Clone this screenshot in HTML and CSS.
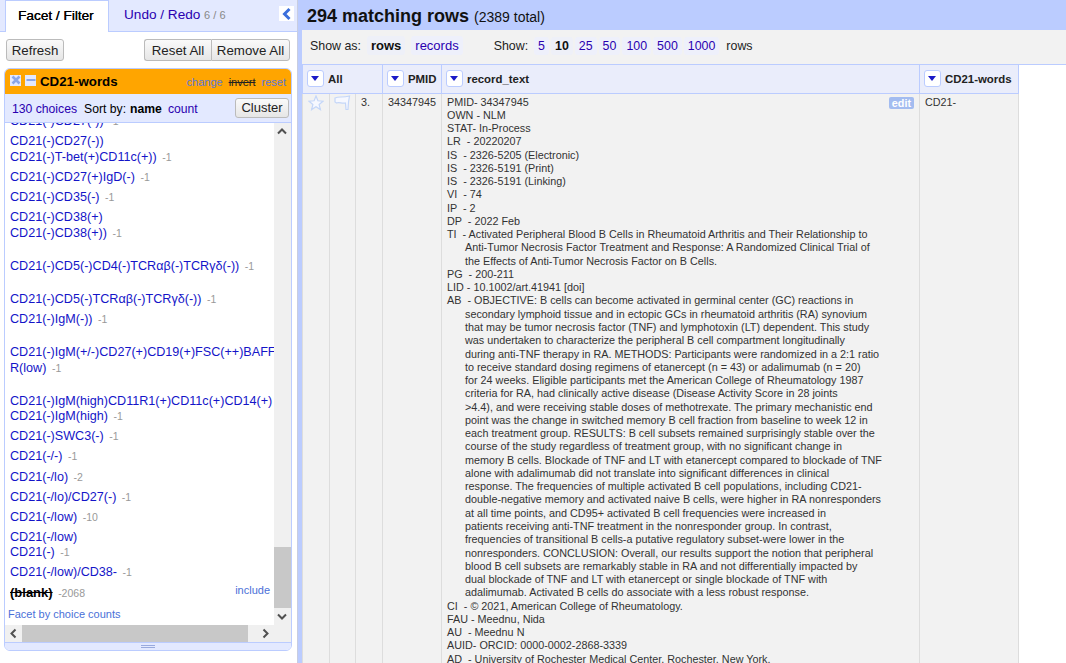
FILE: index.html
```html
<!DOCTYPE html>
<html lang="en">
<head>
<meta charset="utf-8">
<title>OpenRefine</title>
<link rel="stylesheet" href="styles.css">
</head>
<body>
<div class="app">
  <aside class="left">
    <div class="tabs">
      <div class="tab active">Facet / Filter</div>
      <div class="tab">Undo / Redo <span class="count">6 / 6</span></div>
      <div class="collapse"><svg width="14" height="14" viewBox="0 0 14 14"><path d="M9.5 2 L4.5 7 L9.5 12" fill="none" stroke="#3b6fdc" stroke-width="3"/></svg></div>
    </div>
    <div class="controls">
      <button class="btn refresh">Refresh</button>
      <div class="btn-group"><button class="btn joined-l">Reset All</button><button class="btn joined-r">Remove All</button></div>
    </div>
    <section class="facet">
      <div class="facet-head">
        <span class="mini"><svg width="10" height="10" viewBox="0 0 10 10"><path d="M1.5 1.5 L8.5 8.5 M8.5 1.5 L1.5 8.5" stroke="#8aa6e8" stroke-width="2.6"/></svg></span>
        <span class="mini"><svg width="10" height="10" viewBox="0 0 10 10"><path d="M0.5 5 H9.5" stroke="#8aa6e8" stroke-width="2"/></svg></span>
        <span class="facet-title">CD21-words</span>
        <span class="facet-links"><span>change</span><span class="strike">invert</span><span>reset</span></span>
      </div>
      <div class="facet-bar">
        <span class="link">130 choices</span>
        <span class="sort">Sort by:</span>
        <b>name</b>
        <span class="link">count</span>
        <button class="btn cluster">Cluster</button>
      </div>
      <div class="facet-main">
        <div class="list">
          <div class="list-in">
            <div class="it"><a>CD21(-)CD27(-))</a> <i>-1</i></div>
            <div class="it"><a>CD21(-)CD27(-))<br>CD21(-)T-bet(+)CD11c(+))</a> <i>-1</i></div>
            <div class="it"><a>CD21(-)CD27(+)IgD(-)</a> <i>-1</i></div>
            <div class="it"><a>CD21(-)CD35(-)</a> <i>-1</i></div>
            <div class="it"><a>CD21(-)CD38(+)<br>CD21(-)CD38(+))</a> <i>-1</i></div>
            <div class="it gap"><a>CD21(-)CD5(-)CD4(-)TCRαβ(-)TCRγδ(-))</a> <i>-1</i></div>
            <div class="it gap"><a>CD21(-)CD5(-)TCRαβ(-)TCRγδ(-))</a> <i>-1</i></div>
            <div class="it"><a>CD21(-)IgM(-))</a> <i>-1</i></div>
            <div class="it gap"><a>CD21(-)IgM(+/-)CD27(+)CD19(+)FSC(++)BAFF<br>R(low)</a> <i>-1</i></div>
            <div class="it gap"><a>CD21(-)IgM(high)CD11R1(+)CD11c(+)CD14(+)<br>CD21(-)IgM(high)</a> <i>-1</i></div>
            <div class="it"><a>CD21(-)SWC3(-)</a> <i>-1</i></div>
            <div class="it"><a>CD21(-/-)</a> <i>-1</i></div>
            <div class="it"><a>CD21(-/lo)</a> <i>-2</i></div>
            <div class="it"><a>CD21(-/lo)/CD27(-)</a> <i>-1</i></div>
            <div class="it"><a>CD21(-/low)</a> <i>-10</i></div>
            <div class="it"><a>CD21(-/low)<br>CD21(-)</a> <i>-1</i></div>
            <div class="it"><a>CD21(-/low)/CD38-</a> <i>-1</i></div>
            <div class="it blank"><a>(blank)</a> <i>-2068</i><span class="include">include</span></div>
            <div class="by-count">Facet by choice counts</div>
          </div>
        </div>
        <div class="vbar">
          <svg class="arrow" width="16" height="17" viewBox="0 0 16 17"><path d="M4 10.5 L8 6.5 L12 10.5" fill="none" stroke="#505050" stroke-width="2"/></svg>
          <div class="vtrack"><div class="vthumb"></div></div>
          <svg class="arrow" width="16" height="17" viewBox="0 0 16 17"><path d="M4 6.5 L8 10.5 L12 6.5" fill="none" stroke="#505050" stroke-width="2"/></svg>
        </div>
      </div>
      <div class="hbar">
        <svg class="arrow" width="17" height="17" viewBox="0 0 17 17"><path d="M10.5 4.5 L6.5 8.5 L10.5 12.5" fill="none" stroke="#505050" stroke-width="2"/></svg>
        <div class="hthumb"></div>
        <svg class="arrow arrow-r" width="17" height="17" viewBox="0 0 17 17"><path d="M6.5 4.5 L10.5 8.5 L6.5 12.5" fill="none" stroke="#505050" stroke-width="2"/></svg>
        <div class="corner"></div>
      </div>
      <div class="grip"><span></span></div>
    </section>
  </aside>
  <main class="right">
    <h1 class="summary">294 matching rows <span class="total">(2389 total)</span></h1>
    <div class="viewbar">
      <span class="label">Show as:</span><span class="pill as cur">rows</span><span class="pill as">records</span>
      <span class="label show">Show:</span><span class="pill">5</span><span class="pill cur">10</span><span class="pill">25</span><span class="pill">50</span><span class="pill">100</span><span class="pill">500</span><span class="pill">1000</span><span class="label rows">rows</span>
    </div>
    <table class="data">
      <colgroup><col class="c1"><col class="c2"><col class="c3"><col class="c4"><col class="c5"><col class="c6"></colgroup>
      <thead>
        <tr>
          <th colspan="3"><span class="th"><span class="dd"></span>All</span></th>
          <th><span class="th"><span class="dd"></span>PMID</span></th>
          <th><span class="th"><span class="dd"></span>record_text</span></th>
          <th><span class="th"><span class="dd"></span>CD21-words</span></th>
        </tr>
      </thead>
      <tbody>
        <tr>
          <td class="ic"><svg class="star" width="16" height="16" viewBox="0 0 16 16"><path d="M8 1 L9.9 5.8 L15 6.2 L11.1 9.5 L12.4 14.6 L8 11.8 L3.6 14.6 L4.9 9.5 L1 6.2 L6.1 5.8 Z" fill="#f6f8ff" stroke="#c4d6f8" stroke-width="1.2"/></svg></td>
          <td class="ic"><svg class="flag" width="17" height="16" viewBox="0 0 17 16"><path d="M1 3 C5 1 8 3 15.5 1 L14.5 7 L14 14.5 H12 L11.5 8 C8 9 5 6.5 2.5 8 L1 7 Z" fill="#f6f8ff" stroke="#c4d6f8" stroke-width="1.2"/></svg></td>
          <td class="num">3.</td>
          <td>34347945</td>
          <td class="rec">
            <span class="edit">edit</span>
            <div>PMID- 34347945</div>
            <div>OWN - NLM</div>
            <div>STAT- In-Process</div>
            <div>LR  - 20220207</div>
            <div>IS  - 2326-5205 (Electronic)</div>
            <div>IS  - 2326-5191 (Print)</div>
            <div>IS  - 2326-5191 (Linking)</div>
            <div>VI  - 74</div>
            <div>IP  - 2</div>
            <div>DP  - 2022 Feb</div>
            <div>TI  - Activated Peripheral Blood B Cells in Rheumatoid Arthritis and Their Relationship to</div>
            <div class="ind">Anti-Tumor Necrosis Factor Treatment and Response: A Randomized Clinical Trial of</div>
            <div class="ind">the Effects of Anti-Tumor Necrosis Factor on B Cells.</div>
            <div>PG  - 200-211</div>
            <div>LID - 10.1002/art.41941 [doi]</div>
            <div>AB  - OBJECTIVE: B cells can become activated in germinal center (GC) reactions in</div>
            <div class="ind">secondary lymphoid tissue and in ectopic GCs in rheumatoid arthritis (RA) synovium</div>
            <div class="ind">that may be tumor necrosis factor (TNF) and lymphotoxin (LT) dependent. This study</div>
            <div class="ind">was undertaken to characterize the peripheral B cell compartment longitudinally</div>
            <div class="ind">during anti-TNF therapy in RA. METHODS: Participants were randomized in a 2:1 ratio</div>
            <div class="ind">to receive standard dosing regimens of etanercept (n = 43) or adalimumab (n = 20)</div>
            <div class="ind">for 24 weeks. Eligible participants met the American College of Rheumatology 1987</div>
            <div class="ind">criteria for RA, had clinically active disease (Disease Activity Score in 28 joints</div>
            <div class="ind">&gt;4.4), and were receiving stable doses of methotrexate. The primary mechanistic end</div>
            <div class="ind">point was the change in switched memory B cell fraction from baseline to week 12 in</div>
            <div class="ind">each treatment group. RESULTS: B cell subsets remained surprisingly stable over the</div>
            <div class="ind">course of the study regardless of treatment group, with no significant change in</div>
            <div class="ind">memory B cells. Blockade of TNF and LT with etanercept compared to blockade of TNF</div>
            <div class="ind">alone with adalimumab did not translate into significant differences in clinical</div>
            <div class="ind">response. The frequencies of multiple activated B cell populations, including CD21-</div>
            <div class="ind">double-negative memory and activated naive B cells, were higher in RA nonresponders</div>
            <div class="ind">at all time points, and CD95+ activated B cell frequencies were increased in</div>
            <div class="ind">patients receiving anti-TNF treatment in the nonresponder group. In contrast,</div>
            <div class="ind">frequencies of transitional B cells-a putative regulatory subset-were lower in the</div>
            <div class="ind">nonresponders. CONCLUSION: Overall, our results support the notion that peripheral</div>
            <div class="ind">blood B cell subsets are remarkably stable in RA and not differentially impacted by</div>
            <div class="ind">dual blockade of TNF and LT with etanercept or single blockade of TNF with</div>
            <div class="ind">adalimumab. Activated B cells do associate with a less robust response.</div>
            <div>CI  - © 2021, American College of Rheumatology.</div>
            <div>FAU - Meednu, Nida</div>
            <div>AU  - Meednu N</div>
            <div>AUID- ORCID: 0000-0002-2868-3339</div>
            <div>AD  - University of Rochester Medical Center, Rochester, New York.</div>
          </td>
          <td>CD21-</td>
        </tr>
      </tbody>
    </table>
  </main>
</div>
</body>
</html>
```

FILE: styles.css
```css
* { box-sizing: border-box; }
html, body { margin: 0; height: 100%; overflow: hidden; background: #fff; }
body { font-family: "Liberation Sans", Arial, sans-serif; font-size: 13px; color: #000; }
.app { display: flex; height: 663px; width: 1066px; }

.left { width: 298px; flex: none; display: flex; flex-direction: column; border-right: 1px solid #c8cde0; }
.tabs { height: 32px; flex: none; display: flex; background: #e3e9ff; border-bottom: 1px solid #bbccff; padding-left: 5px; position: relative; }
.tab { height: 32px; padding: 7px 0 0 0; margin-left: 15px; font-size: 13.6px; color: #2a00b0; white-space: nowrap; }
.tab.active { width: 104px; margin-left: 0; padding-left: 12px; color: #000; background: #fff; border: 1px solid #bbccff; border-bottom: 0; text-shadow: 0.3px 0 0 #000; }
.count { font-size: 11px; color: #888; }
.collapse { position: absolute; left: 279px; top: 6px; width: 15px; height: 15px; background: #fff; display: flex; align-items: center; justify-content: center; }
.controls { height: 36px; flex: none; display: flex; justify-content: space-between; padding: 7px 7px 0 6px; }
.btn { font: 13.3px "Liberation Sans", Arial, sans-serif; color: #222; height: 22px; padding: 0; background: linear-gradient(#fafafa, #e6e6e6); border: 1px solid #bbb; border-radius: 3px; white-space: nowrap; }
.refresh { width: 58px; }
.btn-group { display: flex; }
.joined-l { border-radius: 3px 0 0 3px; border-right: 0; width: 67px; }
.joined-r { border-radius: 0 3px 3px 0; width: 79px; }

.facet { margin-left: 4px; width: 288px; height: 583px; flex: none; border: 1px solid #bbccff; border-radius: 6px; overflow: hidden; display: flex; flex-direction: column; }
.facet-head { height: 25px; flex: none; background: #ffa500; display: flex; align-items: center; padding: 0 5px; gap: 4px; }
.mini { width: 11px; height: 11px; margin-bottom: 3px; background: #e3e9ff; display: flex; align-items: center; justify-content: center; }
.facet-title { font-size: 13.3px; font-weight: bold; }
.facet-links { margin-left: auto; font-size: 11px; color: #5b77d6; display: flex; gap: 6px; }
.strike { color: #222; text-decoration: line-through; }
.facet-bar { height: 29px; flex: none; background: #e3e9ff; border-bottom: 1px solid #bbccff; display: flex; align-items: center; padding: 1px 2px 0 7px; font-size: 12.2px; }
.link { color: #2a00b0; }
.sort { margin-left: 7px; }
.facet-bar b { margin-left: 4px; }
.facet-bar b + .link { margin-left: 6px; }
.cluster { margin-left: auto; height: 20px; width: 54px; font-size: 13px; margin-top: -2px; }

.facet-main { flex: 1; min-height: 0; display: flex; }
.list { flex: 1; min-width: 0; overflow: hidden; font-size: 12.6px; }
.list-in { margin-top: -9px; padding-left: 5px; white-space: nowrap; }
.it { line-height: 15.6px; padding-bottom: 4.5px; }
.it.gap { margin-top: 13px; }
.it a { color: #1414c8; }
.it i { font-style: normal; font-size: 10.5px; line-height: 0; color: #999; margin-left: 2px; }
.blank { position: relative; margin-top: -1px; }
.blank a { color: #000; font-weight: bold; font-size: 13px; text-decoration: line-through; }
.include { position: absolute; right: 4px; top: -1px; font-size: 11px; line-height: 12px; color: #4a70d8; }
.by-count { font-size: 11px; line-height: 14px; color: #4a70d8; padding-top: 1px; margin-left: -2px; }
.vbar { width: 17px; flex: none; background: #f0f0f0; display: flex; flex-direction: column; }
.arrow { flex: none; display: block; }
.vtrack { flex: 1; position: relative; }
.vthumb { position: absolute; left: 0; right: 0; bottom: 0; height: 61px; background: #c8c8c8; }
.hbar { height: 17px; flex: none; background: #f0f0f0; display: flex; }
.hthumb { width: 226px; background: #c8c8c8; }
.arrow-r { margin-left: 9px; }
.corner { flex: 1; background: #f0f0f0; }
.grip { height: 8px; flex: none; background: #e3e9ff; border-top: 1px solid #bbccff; display: flex; align-items: center; justify-content: center; }
.grip span { width: 14px; height: 3px; border-top: 1px solid #99aadd; border-bottom: 1px solid #99aadd; }

.right { flex: 1; min-width: 0; border-left: 4px solid #bbccff; display: flex; flex-direction: column; overflow: hidden; }
.summary { margin: 0; height: 30px; flex: none; background: #bbccff; font-size: 18px; font-weight: bold; line-height: 32px; padding-left: 5px; color: #111; }
.total { font-size: 14px; font-weight: normal; }
.viewbar { height: 35px; flex: none; background: #f2f2f2; border-bottom: 1px solid #bbccff; display: flex; align-items: center; padding: 0 0 3px 8px; font-size: 12.4px; color: #222; white-space: nowrap; }
.pill { padding: 2px 4px; margin-left: 2px; color: #2a00b0; background: #eef0fb; border-radius: 3px; }
.pill.as { font-size: 13px; margin-left: 6px; }
.pill.cur { color: #111; font-weight: bold; background: #eef0f8; }
.label.show { margin-left: 31px; }
.label.rows { margin-left: 7px; }
.label + .pill { margin-left: 6px; }

.data { table-layout: fixed; width: 716px; border-collapse: collapse; background: #f2f2f2; font-size: 10.8px; color: #333; flex: none; }
.c1 { width: 27px; } .c2 { width: 26px; } .c3 { width: 27px; } .c4 { width: 59px; } .c5 { width: 478px; } .c6 { width: 99px; }
.data th { height: 28px; padding: 0 0 0 4px; background: #eaedfb; border: 1px solid #bbccff; border-top: 0; text-align: left; font-size: 11.4px; color: #222; white-space: nowrap; }
.th { display: flex; align-items: center; gap: 4px; }
.dd { width: 17px; height: 17px; background: #fff; border: 1px solid #bbccff; border-radius: 3px; position: relative; flex: none; }
.dd::after { content: ""; position: absolute; left: 3px; top: 5px; border: 4.5px solid transparent; border-top: 5px solid #1a1ac8; border-bottom: 0; }
.data td { vertical-align: top; padding: 2px 5px; border-left: 1px solid #ddd; border-right: 1px solid #ddd; line-height: 13.27px; height: 600px; }
.data td.ic { padding: 1px 0 0 5px; }
.data td.ic .flag { margin-left: -1px; }
.data td.num { padding-left: 5px; }
.rec { position: relative; }
.rec div { white-space: pre; }
.rec .ind { padding-left: 18px; }
.edit { position: absolute; right: 5px; top: 3px; background: #a3bcf0; color: #fff; font-weight: bold; border-radius: 2px; padding: 0 3px; line-height: 12px; }
```
